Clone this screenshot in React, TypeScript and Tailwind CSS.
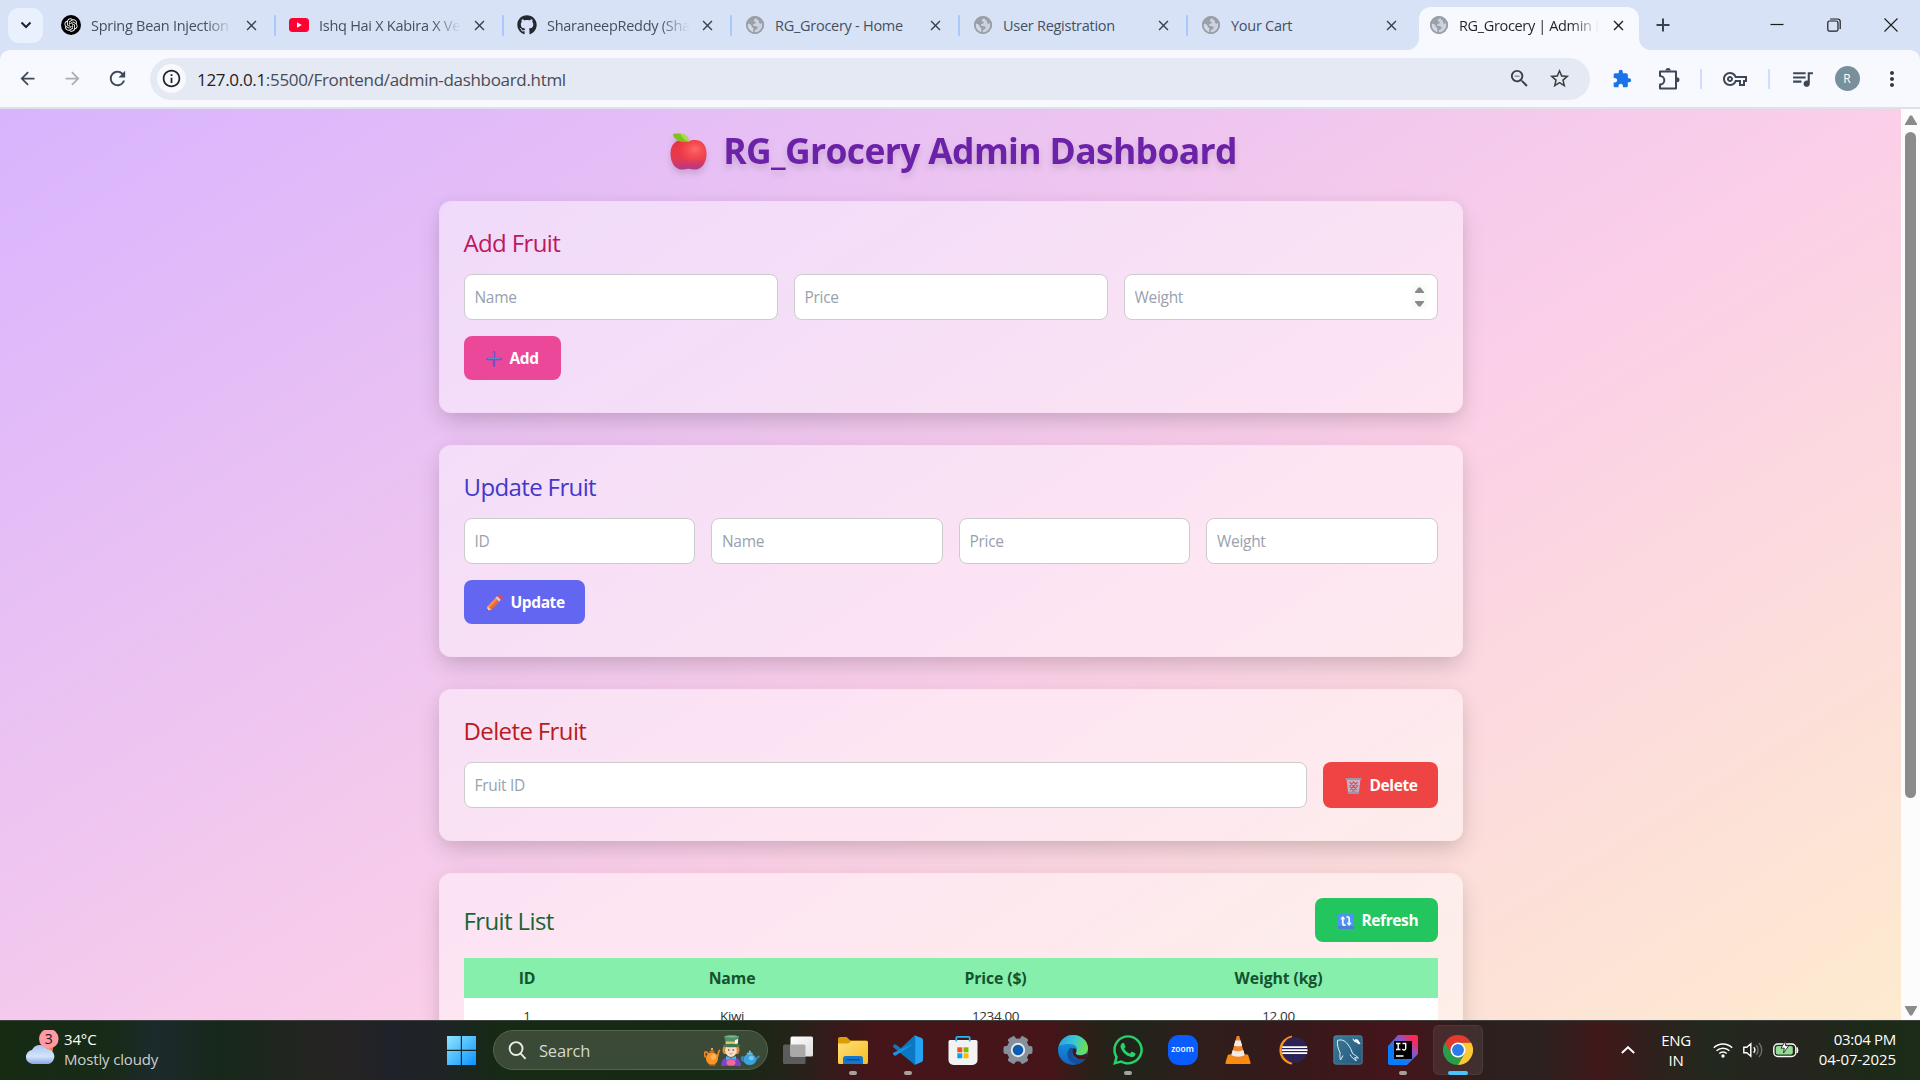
import React from 'react';
import {
  MdArrowBack,
  MdArrowForward,
  MdClose,
  MdExtension,
  MdInfoOutline,
  MdMoreVert,
  MdQueueMusic,
  MdRefresh,
  MdOutlineVpnKey,
  MdOutlineZoomOut,
  MdStarBorder,
} from 'react-icons/md';
import { FaGithub, FaWhatsapp } from 'react-icons/fa';
import { RiOpenaiFill } from 'react-icons/ri';

/* ---------- Browser chrome ---------- */

function Globe() {
  return (
    <svg viewBox="0 0 18 18" className="size-[18px]">
      <circle cx="9" cy="9" r="9" fill="#9aa0a6" />
      <path
        d="M10.500 2.200C8.500 2.500 7 4 8.200 5.300c.8.700 1.800.6 1.600 1.600C9.500 7.900 7 7.400 7 9c0 1.500 2.300 1 3.800 1.500 1.200.4 1 1.600.2 2.300-.8.800-2 .9-2.300 2-.1.700.2 1.200.6 1.600 3.900-.2 7-3.400 7-7.400 0-.7-.1-1.300-.3-1.900-.9.800-2.300.7-2.800-.1-.5-.9.100-1.700-.6-2.400-.7-.6-1.900-.900-2.100-2.400z"
        fill="#d7dff0"
        opacity=".8"
      />
      <path d="M1.700 7.500c1.200.3 2.700.7 3.500 1.700.7 1 .2 1.500 1.400 2.200.9.500.9 1.300.7 2.200-.1.800-.1 1.700.1 2.500C3.800 15.500 1 12 1.700 7.500z" fill="#d7dff0" opacity=".9" />
      <circle cx="9" cy="9" r="8.200" fill="none" stroke="#9aa0a6" strokeWidth="1.600" />
    </svg>
  );
}

function OpenAiIcon() {
  return (
    <span className="-ml-px flex size-5 items-center justify-center rounded-full bg-black text-white">
      <RiOpenaiFill size={16} />
    </span>
  );
}

function YoutubeIcon() {
  return (
    <svg viewBox="0 0 20 14" className="h-[14px] w-5">
      <rect width="20" height="14" rx="3.500" fill="#ff0033" />
      <path d="M8 4.200v5.600l4.800-2.800z" fill="#fff" />
    </svg>
  );
}

type TabItem = { title: string; icon: React.ReactNode; fade?: boolean };

const tabs: TabItem[] = [
  { title: 'Spring Bean Injection', icon: <OpenAiIcon />, fade: true },
  { title: 'Ishq Hai X Kabira X Ve', icon: <YoutubeIcon />, fade: true },
  { title: 'SharaneepReddy (Sha', icon: <FaGithub size={20} color="#24292f" />, fade: true },
  { title: 'RG_Grocery - Home', icon: <Globe /> },
  { title: 'User Registration', icon: <Globe /> },
  { title: 'Your Cart', icon: <Globe /> },
];

const fadeMask = '[mask-image:linear-gradient(to_right,black_80%,transparent)]';

function TabStrip() {
  return (
    <div className="flex h-[50px] bg-[#d8e2f7]">
      <div className="flex h-full w-[49px] shrink-0 items-center pl-2">
        <span className="flex size-[35px] items-center justify-center rounded-[11px] bg-[#e9f0fe]">
          <svg viewBox="0 0 12 12" className="size-3" fill="none" stroke="#1f2328" strokeWidth="2">
            <path d="M1.500 3.500 6 8l4.500-4.500" />
          </svg>
        </span>
      </div>
      {tabs.map((t, i) => (
        <div key={t.title} className="flex h-full w-[228px] shrink-0 items-center pl-3">
          <span className="flex w-5 shrink-0 justify-center">{t.icon}</span>
          <span
            className={
              'ml-[10px] w-[142px] shrink-0 overflow-hidden pt-px text-[14.5px] whitespace-nowrap text-[#44505f] tracking-[-0.27px] ' +
              (t.fade ? fadeMask : '')
            }
          >
            {t.title}
          </span>
          <MdClose className="ml-[10px] shrink-0" size={17} color="#39424e" />
          <span className={'ml-[14px] h-[21px] w-[2px] shrink-0 rounded bg-[#a8c7fa] ' + (i === 5 ? 'invisible' : '')} />
        </div>
      ))}
      <div className="flex h-full w-[249px] shrink-0 items-end">
        <svg viewBox="0 0 12 12" className="-ml-[10px] size-3 shrink-0">
          <path d="M12 0v12H0A12 12 0 0 0 12 0z" fill="#f8f9ff" />
        </svg>
        <div className="flex h-[43px] w-[220px] shrink-0 items-center rounded-t-[12px] bg-[#f8f9ff] pb-[7px] pl-[11px]">
          <Globe />
          <span className={'ml-[11px] w-[140px] overflow-hidden pt-px text-[14.5px] tracking-[-0.35px] whitespace-nowrap text-[#1f2328] ' + fadeMask}>
            RG_Grocery | Admin D
          </span>
          <MdClose className="ml-[11px] shrink-0" size={17} color="#1f2328" />
        </div>
        <svg viewBox="0 0 12 12" className="size-3 shrink-0">
          <path d="M0 0v12h12A12 12 0 0 1 0 0z" fill="#f8f9ff" />
        </svg>
      </div>
      <div className="flex h-full flex-1 items-center">
        <svg viewBox="0 0 14 14" className="-ml-[10px] size-[14px]" stroke="#39424e" strokeWidth="2">
          <path d="M7 .5v13M.5 7h13" />
        </svg>
        <div className="ml-auto flex items-center gap-[43px] pr-[22px]">
          <svg viewBox="0 0 14 14" className="size-[14px]" stroke="#1b1b1b" strokeWidth="1.200">
            <path d="M0.500 6.500h13" />
          </svg>
          <svg viewBox="0 0 14 14" className="size-[14px]" fill="none" stroke="#1b1b1b" strokeWidth="1.200">
            <rect x=".8" y="3" width="10.200" height="10.200" rx="1.800" />
            <path d="M3.200 1h7.300a2.700 2.700 0 0 1 2.700 2.700v7.300" />
          </svg>
          <svg viewBox="0 0 14 14" className="size-[14px]" stroke="#1b1b1b" strokeWidth="1.100">
            <path d="M.5.5l13 13M13.500.5l-13 13" />
          </svg>
        </div>
      </div>
    </div>
  );
}

function Slot({ w, children }: { w: string; children: React.ReactNode }) {
  return <span className={'flex shrink-0 items-center justify-center ' + w}>{children}</span>;
}

function Toolbar() {
  return (
    <div className="h-[59px] bg-[#d8e2f7]">
      <div className="flex h-full items-center rounded-t-[10px] border-b-2 border-[#dde1ea] bg-[#f8f9ff] pl-[5px]">
        <Slot w="w-[45px]">
          <MdArrowBack size={21} color="#3c4858" />
        </Slot>
        <Slot w="w-[45px]">
          <MdArrowForward size={21} color="#a9adb5" />
        </Slot>
        <Slot w="w-[45px]">
          <MdRefresh size={23} color="#3c4858" />
        </Slot>
        <div className="ml-[10px] flex h-[42px] w-[1440px] shrink-0 items-center rounded-full bg-[#e5e9f3] pl-[7px]">
          <span className="flex size-[29px] items-center justify-center rounded-full bg-[#f8f9ff]">
            <MdInfoOutline size={21} color="#1f2328" />
          </span>
          <span className="ml-[11px] pt-[2px] text-[17px] tracking-[-0.32px] whitespace-nowrap text-[#474c55]">
            <span className="text-[#1b1e23]">127.0.0.1</span>:5500/Frontend/admin-dashboard.html
          </span>
          <span className="ml-auto flex items-center gap-[17px] pr-[19px]">
            <MdOutlineZoomOut size={23} color="#3c4043" />
            <MdStarBorder size={23} color="#3c4043" />
          </span>
        </div>
        <Slot w="w-[64px]">
          <MdExtension size={20} color="#1a73e8" />
        </Slot>
        <Slot w="w-[30px]">
          <svg viewBox="0 0 24 26" className="h-[26px] w-6" fill="none" stroke="#3c4858" strokeWidth="2" strokeLinejoin="round">
            <path d="M3 5.500h16v17H3v-4a4.300 4.300 0 0 0 0-8.600z" />
            <path d="M8.500 4.500a2.600 2.600 0 0 1 5.200 0zM20 11.300a2.500 2.500 0 0 1 0 5z" fill="#3c4858" strokeWidth="0" />
          </svg>
        </Slot>
        <span className="ml-[16px] h-[20px] w-[2px] shrink-0 bg-[#cfdefb]" />
        <Slot w="w-[66px]">
          <MdOutlineVpnKey size={24} color="#3c4858" />
        </Slot>
        <span className="h-[20px] w-[2px] shrink-0 bg-[#cfdefb]" />
        <Slot w="w-[64px]">
          <MdQueueMusic size={25} color="#3c4858" />
        </Slot>
        <Slot w="w-[26px]">
          <span className="flex size-[25px] shrink-0 items-center justify-center rounded-full bg-[#78909c] text-[12px] text-white">R</span>
        </Slot>
        <Slot w="w-[64px]">
          <MdMoreVert size={24} color="#303a46" />
        </Slot>
      </div>
    </div>
  );
}

/* ---------- Emoji drawings ---------- */

function Apple() {
  return (
    <svg viewBox="0 0 37 37" className="mt-[2px] h-[37px] w-[37px]">
      <defs>
        <linearGradient id="appleBody" x1="0" y1="0" x2="0" y2="1">
          <stop offset="0" stopColor="#e9343f" />
          <stop offset=".65" stopColor="#e63950" />
          <stop offset="1" stopColor="#b03a8c" />
        </linearGradient>
        <radialGradient id="appleGlow" cx=".68" cy=".32" r=".5">
          <stop offset="0" stopColor="#ff6a66" />
          <stop offset="1" stopColor="#ff4a4a" stopOpacity="0" />
        </radialGradient>
      </defs>
      <path d="M18.500 8.500C23 5.800 36.500 5 36.500 21c0 9-5 15.500-11 15.500-3 0-4-.8-7-.8s-4 .8-7 .8C5.500 36.500.5 30 .5 21c0-16 13.500-15.200 18-12.500z" fill="url(#appleBody)" />
      <path d="M18.500 8.500C23 5.800 36.500 5 36.500 21c0 9-5 15.500-11 15.500-3 0-4-.8-7-.8s-4 .8-7 .8C5.500 36.500.5 30 .5 21c0-16 13.500-15.200 18-12.500z" fill="url(#appleGlow)" />
      <path d="M3 1c8-1.500 15 .5 16 7.500C11 10 3.500 7.500 3 1z" fill="#7fc31c" />
      <path d="M10 .6c5 .3 8.500 3 9 7.900-3 .2-6-3-9-7.900z" fill="#a5dc4a" />
    </svg>
  );
}

function Plus() {
  return (
    <svg viewBox="0 0 16 16" className="size-4">
      <path d="M8 1.300v13.400" stroke="#7a4fb5" strokeWidth="2.400" strokeLinecap="round" />
      <path d="M1.300 8h13.400" stroke="#6a55c4" strokeWidth="2.400" strokeLinecap="round" />
      <path d="M7.600 1.500V7.600H1.500M8 7.600h6" stroke="#5f93dc" strokeWidth=".9" fill="none" />
    </svg>
  );
}

function Pencil() {
  return (
    <svg viewBox="0 0 17 17" className="size-[17px]">
      <path d="M1.500 12.300 9.500 3.800l3.700 3.700-8 8.200-3.900.9z" fill="#ff8a3c" />
      <path d="M3.300 14l8-8.300 1.900 1.800-8 8.200z" fill="#e8663a" />
      <path d="M1.500 12.300l3.700 3.400-4 .9z" fill="#f3c9a0" />
      <path d="M1.300 15l1.200 1.300-1.600.4z" fill="#4b3a3a" />
      <path d="M9.500 3.800l1.700-1.800 3.700 3.700-1.700 1.800z" fill="#d3cfe4" />
      <path d="M11.200 2l1.300-1.300a1.300 1.300 0 0 1 1.800 0L16.200 2.600a1.300 1.300 0 0 1 0 1.800L14.900 5.700z" fill="#f5443f" />
    </svg>
  );
}

function Trash() {
  return (
    <svg viewBox="0 0 17 17" className="size-[17px]">
      <path d="M1.500 2h14l-1.700 14.500H3.200z" fill="#c3b4c6" />
      <path d="M4.500 5l7.500 8M8 4.500l5 5M4.500 9l5.500 6M12.500 5L5 13M9 4.500l-4.500 5M12.500 9L7 15" stroke="#d8505c" strokeWidth="1.100" />
      <rect x=".5" y="1" width="16" height="2" rx=".6" fill="#a193a9" />
      <rect x="3" y="14.500" width="11" height="2" rx=".6" fill="#a193a9" />
    </svg>
  );
}

function RefreshBadge() {
  return (
    <svg viewBox="0 0 16 16" className="ml-px size-4" fill="none">
      <rect width="16" height="16" rx="1.500" fill="#4a95f5" />
      <path d="M0 13h16v1.500A1.500 1.500 0 0 1 14.500 16h-13A1.500 1.500 0 0 1 0 14.500z" fill="#4a7fe0" />
      <path d="M7.500 12.200H6.800A2 2 0 0 1 4.800 10.200V4.500M8.500 3.800h.7a2 2 0 0 1 2 2v5.700" stroke="#fff" strokeWidth="1.700" />
      <path d="M2.200 6.300 4.800 3l2.600 3.300zM8.600 9.700h5.200L11.200 13z" fill="#fff" />
    </svg>
  );
}

/* ---------- Dashboard ---------- */

function Card({ className, children }: { className: string; children: React.ReactNode }) {
  return (
    <section
      className={
        'flex flex-col rounded-xl border border-white/40 bg-white/45 bg-clip-padding px-6 pt-6 shadow-[0_10px_24px_-3px_rgba(0,0,0,0.18),0_0_14px_rgba(0,0,0,0.03)] ' +
        className
      }
    >
      {children}
    </section>
  );
}

function Heading({ color, children }: { color: string; children: React.ReactNode }) {
  return <h2 className={'h-8 pt-px text-[24px] leading-8 font-[530] tracking-[-0.62px] ' + color}>{children}</h2>;
}

function Field({ placeholder, className = 'w-full' }: { placeholder: string; className?: string }) {
  return (
    <input
      placeholder={placeholder}
      className={
        'h-[46px] min-w-0 rounded-lg border border-[#cccccc] bg-white px-[10px] text-[15.5px] tracking-[-0.3px] text-gray-800 outline-none placeholder:text-gray-400 ' +
        className
      }
    />
  );
}

function Button({ className, icon, label }: { className: string; icon: React.ReactNode; label: string }) {
  return (
    <button className={'flex shrink-0 items-center gap-[8px] rounded-lg pt-px pl-[22px] text-[15.5px] font-bold tracking-[-0.4px] text-white ' + className}>
      {icon}
      <span className="pt-px">{label}</span>
    </button>
  );
}

function Dashboard() {
  return (
    <div className="flex h-[911px] overflow-hidden">
      <div className="h-[1188px] flex-1 bg-[linear-gradient(to_bottom_right,#d8b4fe,#fbcfe8,#fef3c7)] pt-[21px]">
        <h1 className="mx-auto mb-[31px] flex h-10 w-[1024px] items-center justify-center pl-[6px] text-[35.5px] leading-10 font-bold tracking-[-0.66px] text-[#6b21a8] drop-shadow-[0_4px_3px_rgba(0,0,0,0.13)]">
          <Apple />
          <span className="ml-[16px] whitespace-nowrap">RG_Grocery Admin Dashboard</span>
        </h1>
        <main className="mx-auto flex w-[1024px] flex-col gap-8">
          <Card className="h-[212px]">
            <Heading color="text-[#be185d]">Add Fruit</Heading>
            <div className="mt-4 grid grid-cols-3 gap-4">
              <Field placeholder="Name" />
              <Field placeholder="Price" />
              <div className="relative">
                <Field placeholder="Weight" />
                <span className="absolute top-[11px] right-[11px] flex h-6 w-[15px] flex-col items-center justify-between bg-[#fafafa] py-[2px]">
                  <svg viewBox="0 0 9 6" className="h-[6px] w-[9px]">
                    <path d="M3.500.5h2L9 5v1H0V5z" fill="#8a8a8a" />
                  </svg>
                  <svg viewBox="0 0 9 6" className="h-[6px] w-[9px]">
                    <path d="M3.500 5.500h2L9 1V0H0v1z" fill="#8a8a8a" />
                  </svg>
                </span>
              </div>
            </div>
            <Button className="mt-4 h-11 w-[97px] bg-[#ec4899]" icon={<Plus />} label="Add" />
          </Card>

          <Card className="h-[212px]">
            <Heading color="text-[#4338ca]">Update Fruit</Heading>
            <div className="mt-4 grid grid-cols-4 gap-4">
              <Field placeholder="ID" />
              <Field placeholder="Name" />
              <Field placeholder="Price" />
              <Field placeholder="Weight" />
            </div>
            <Button className="mt-4 h-11 w-[121px] bg-[#6366f1]" icon={<Pencil />} label="Update" />
          </Card>

          <Card className="h-[152px]">
            <Heading color="text-[#b91c1c]">Delete Fruit</Heading>
            <div className="mt-4 flex gap-4">
              <Field placeholder="Fruit ID" className="flex-1" />
              <Button className="h-[46px] w-[115px] bg-[#ef4444]" icon={<Trash />} label="Delete" />
            </div>
          </Card>

          <Card className="h-[300px]">
            <div className="flex h-11 items-center justify-between">
              <Heading color="text-[#166534]">Fruit List</Heading>
              <Button className="h-11 w-[123px] bg-[#22c55e]" icon={<RefreshBadge />} label="Refresh" />
            </div>
            <table className="mt-4 w-full table-fixed text-center">
              <colgroup>
                <col className="w-[127px]" />
                <col className="w-[283px]" />
                <col className="w-[244px]" />
                <col className="w-[320px]" />
              </colgroup>
              <thead>
                <tr className="h-10 bg-[#86efac] text-[15.8px] font-bold tracking-[-0.12px] text-[#14532d]">
                  <th className="pt-px">ID</th>
                  <th className="pt-px">Name</th>
                  <th className="pt-px">Price ($)</th>
                  <th className="pt-px pl-[2px]">Weight (kg)</th>
                </tr>
              </thead>
              <tbody>
                <tr className="h-[36px] bg-white text-[13.5px] tracking-[-0.4px] text-[#333333]">
                  <td>1</td>
                  <td>Kiwi</td>
                  <td>1234.00</td>
                  <td className="pl-[2px]">12.00</td>
                </tr>
              </tbody>
            </table>
          </Card>
        </main>
      </div>
      <div className="flex w-[19px] shrink-0 flex-col items-center bg-[#fcfcfc] pt-[6px] pb-[4px]">
        <svg viewBox="0 0 12 10" className="h-[10px] w-3">
          <path d="M5 .5h2L12 9v1H0V9z" fill="#8b8b8b" />
        </svg>
        <div className="mt-[7px] h-[666px] w-[11px] rounded-full bg-[#8b8b8b]" />
        <svg viewBox="0 0 12 10" className="mt-auto h-[10px] w-3">
          <path d="M5 9.500h2L12 1V0H0v1z" fill="#8b8b8b" />
        </svg>
      </div>
    </div>
  );
}

/* ---------- Taskbar icons ---------- */

function WeatherIcon() {
  return (
    <svg viewBox="0 0 38 40" className="h-10 w-[38px]">
      <defs>
        <linearGradient id="cloud" x1="0" y1="0" x2="0" y2="1">
          <stop offset="0" stopColor="#a9c6f5" />
          <stop offset=".6" stopColor="#d5e3fa" />
          <stop offset="1" stopColor="#86a9e8" />
        </linearGradient>
      </defs>
      <circle cx="22" cy="19" r="6" fill="#f58220" />
      <path d="M7.500 34a7.100 7.100 0 0 1-.5-14.100A8.500 8.500 0 0 1 22 19a7.600 7.600 0 0 1 1.500 15z" fill="url(#cloud)" />
      <ellipse cx="23.800" cy="8.800" rx="9.800" ry="9.900" fill="#ff99a4" />
      <text x="23.800" y="13.800" fontSize="14" textAnchor="middle" fill="#1b1b1b">
        3
      </text>
    </svg>
  );
}

function WindowsLogo() {
  return (
    <svg viewBox="0 0 29 29" className="size-[29px]">
      <defs>
        <linearGradient id="win" x1="0" y1="0" x2="1" y2="1">
          <stop offset="0" stopColor="#8fe6ff" />
          <stop offset="1" stopColor="#0a93ff" />
        </linearGradient>
      </defs>
      <path d="M0 0h13.800v13.800H0zM15 0h14v13.800H15zM0 15h13.800v14H0zM15 15h14v14H15z" fill="url(#win)" />
    </svg>
  );
}

function TeaParty() {
  return (
    <svg viewBox="0 0 56 31" className="h-[31px] w-14">
      <path d="M4.500 19C1 14.500-.5 18 1.500 22.500M12 23c3-1 1-6 4-8" stroke="#ee8420" strokeWidth="1.800" fill="none" />
      <ellipse cx="8" cy="23.500" rx="6" ry="6.300" fill="#fb9626" />
      <ellipse cx="9.500" cy="22" rx="2.500" ry="3" fill="#ffb555" />
      <path d="M5 30.500l1-1.500h5l1 1.500zM5.200 17.500c0-3 5.600-3 5.600 0z" fill="#d96b12" />
      <circle cx="8" cy="14" r="1.200" fill="#f9a23a" />
      <path d="M17 31c0-6 3-9 10-9s10 3 10 9z" fill="#7a45c8" />
      <path d="M20 11c-2 2-2 6 0 8h14c2-2 2-6 0-8z" fill="#e48b3a" />
      <ellipse cx="27" cy="15.500" rx="5.800" ry="6.500" fill="#f8dcc4" />
      <circle cx="24.800" cy="15" r=".8" fill="#4a3326" />
      <circle cx="29.200" cy="15" r=".8" fill="#4a3326" />
      <path d="M25.500 18.500q1.500 1 3 0" stroke="#c46a5a" strokeWidth=".7" fill="none" />
      <path d="M20 1.500c3-1.800 12-1.800 15 0l-1.500 8h-11z" fill="#4f8f63" />
      <path d="M20 1.500c3-1.500 12-1.500 15 0-3 1.500-12 1.500-15 0z" fill="#79b487" />
      <path d="M21.300 6.500h12.700l-.5 3H22z" fill="#e9c27a" />
      <path d="M31 5l3-1v4l-3 1z" fill="#fff3dc" />
      <ellipse cx="27.500" cy="10.500" rx="9" ry="1.800" fill="#3c7a50" />
      <path d="M22 21l5 2 5-2v4l-5-1.500L22 25z" fill="#46b2ec" />
      <ellipse cx="27" cy="27.500" rx="4.500" ry="3.300" fill="#f2689a" />
      <path d="M40.500 22.500c-4-2-4 3 1 4M50 26c3 0 2-4.500 5.500-4.500" stroke="#2f8cc8" strokeWidth="1.800" fill="none" />
      <ellipse cx="45.800" cy="24.500" rx="6.300" ry="5.600" fill="#3ba3de" />
      <ellipse cx="47.300" cy="23" rx="2.500" ry="2.300" fill="#74c9f2" />
      <path d="M42.500 19.500c0-3 6.500-3 6.500 0z" fill="#6cc4f0" />
      <circle cx="45.800" cy="16.600" r="1" fill="#6cc4f0" />
    </svg>
  );
}

function TaskView() {
  return (
    <svg viewBox="0 0 30 30" className="size-[30px]">
      <defs>
        <linearGradient id="tvFront" x1="0" y1="0" x2="1" y2="1">
          <stop offset="0" stopColor="#ffffff" />
          <stop offset="1" stopColor="#dedede" />
        </linearGradient>
      </defs>
      <rect x="0" y="9.500" width="22.500" height="19.500" rx="1.500" fill="#5c5c5c" />
      <rect x="7.500" y="1.500" width="22.500" height="20" rx="1.500" fill="url(#tvFront)" />
      <path d="M7.500 9.500H21a1.500 1.500 0 0 1 1.500 1.500v10.500H9A1.500 1.500 0 0 1 7.500 20z" fill="#a9a9a9" />
    </svg>
  );
}

function Explorer() {
  return (
    <svg viewBox="0 0 30 30" className="size-[30px]">
      <defs>
        <linearGradient id="folder" x1="0" y1="0" x2="1" y2="1">
          <stop offset="0" stopColor="#ffe07a" />
          <stop offset="1" stopColor="#f7bb1f" />
        </linearGradient>
      </defs>
      <path d="M0 4a2 2 0 0 1 2-2h6.500l4 3.500H28a2 2 0 0 1 2 2V12H0z" fill="#dd9b05" />
      <path d="M0 8.500h10.500L13 6h15.500A1.500 1.500 0 0 1 30 7.500v20a1.500 1.500 0 0 1-1.500 1.500h-27A1.500 1.500 0 0 1 0 27.500z" fill="url(#folder)" />
      <path d="M5 29v-5.500a2.500 2.500 0 0 1 2.500-2.500h15a2.500 2.500 0 0 1 2.500 2.500V29z" fill="#1377cf" />
      <rect x="8" y="24" width="14" height="1.600" rx=".8" fill="#0a4f96" />
    </svg>
  );
}

function VsCode() {
  return (
    <svg viewBox="0 0 30 30" className="size-[30px]">
      <path d="M22 0 7.800 13.300 2.800 9.400a1.200 1.200 0 0 0-1.500.1L.3 10.600a1.200 1.200 0 0 0 0 1.700L22 30v-7.800z" fill="#0a78c2" />
      <path d="M22 7.800.3 17.700a1.200 1.200 0 0 0 0 1.700l1 1.100a1.200 1.200 0 0 0 1.500.1L22 7.800z" fill="#1c93e0" />
      <path d="M21.500.2 28.600 3A2.200 2.200 0 0 1 30 5v20a2.200 2.200 0 0 1-1.400 2l-7.100 2.900c.5-.3.6-.7.6-1.300V1.400c0-.6-.2-1-.6-1.200z" fill="#26a3f2" />
    </svg>
  );
}

function Store() {
  return (
    <svg viewBox="0 0 30 30" className="size-[30px]">
      <path d="M.5 6.500A1.500 1.500 0 0 1 2 5h26a1.500 1.500 0 0 1 1.500 1.500V25a5 5 0 0 1-5 5h-19a5 5 0 0 1-5-5z" fill="#f3f3f3" />
      <path d="M8.300 6.500V2.900A1 1 0 0 1 9.300 1.900h11.400a1 1 0 0 1 1 1v3.600" fill="none" stroke="#28b4ee" strokeWidth="1.800" />
      <path d="M9.300 12.300h5v5h-5z" fill="#f25022" />
      <path d="M15.500 12.300h5v5h-5z" fill="#7fba00" />
      <path d="M9.300 18.300h5v5h-5z" fill="#00a4ef" />
      <path d="M15.500 18.300h5v5h-5z" fill="#ffb900" />
    </svg>
  );
}

function Gear() {
  return (
    <svg viewBox="0 0 30 30" className="size-[30px]">
      <g fill="#87909a">
        <circle cx="15" cy="15" r="11.500" />
        <rect x="11" y="0.500" width="8" height="29" rx="2" transform="rotate(30 15 15)" />
        <rect x="11" y="0.500" width="8" height="29" rx="2" transform="rotate(90 15 15)" />
        <rect x="11" y="0.500" width="8" height="29" rx="2" transform="rotate(150 15 15)" />
      </g>
      <circle cx="15" cy="15" r="7.200" fill="#e8eaee" />
      <circle cx="15" cy="15" r="5.300" fill="#0d5cb0" />
    </svg>
  );
}

function Edge() {
  return (
    <svg viewBox="0 0 30 30" className="size-[30px]">
      <defs>
        <linearGradient id="edgeTop" x1="0" y1=".2" x2="1" y2=".5">
          <stop offset="0" stopColor="#2f9fe6" />
          <stop offset=".5" stopColor="#38c7d3" />
          <stop offset="1" stopColor="#6ee04f" />
        </linearGradient>
        <linearGradient id="edgeLeft" x1="0" y1="0" x2="0" y2="1">
          <stop offset="0" stopColor="#1b9de2" />
          <stop offset="1" stopColor="#0f63c4" />
        </linearGradient>
      </defs>
      <circle cx="15" cy="15" r="15" fill="url(#edgeLeft)" />
      <path d="M1 11C3 4 8.500 0 15 0c8.500 0 15 6 15 13 0 4.500-3.500 7-7.500 7-4 0-5.500-1.500-4.500-3 2.500-3.500 0-8-6-8-4 0-8 .5-11 2z" fill="url(#edgeTop)" />
      <path d="M11 14c-4 6 0 14 7 15 4 .5 8-2.500 9.500-5.500-8 3-14-1-13-7 .3-1.600 1.300-2.600 2-3-2-1-4.200-1-5.500.5z" fill="#124f9c" />
      <path d="M14.500 16c.2-1.500 1-2.400 1.800-2.800 2.300 1 2.700 2.700 1.700 4.300-.8 1.600.7 2.900 4.500 2.900 2.500 0 4.500-.8 7-2.300-.3 2-1.300 4.200-2.500 5.700-7 2-13-2.300-12.500-7.800z" fill="#46151a" />
    </svg>
  );
}

function Zoom() {
  return (
    <span className="flex size-[30px] items-center justify-center rounded-[11px] bg-[#0b5cff] pb-px text-[8.5px] font-semibold text-white">
      zoom
    </span>
  );
}

function Vlc() {
  return (
    <svg viewBox="0 0 30 30" className="size-[30px]">
      <path d="M5 19.500h20l2.500 8a1 1 0 0 1-1 1.500h-23a1 1 0 0 1-1-1.500z" fill="#f98b0d" />
      <path d="M13.800 1h2.400l6 21c-3 2.500-11.400 2.500-14.400 0z" fill="#f3852a" />
      <path d="M12.400 5.500h5.200l1.500 5c-2 1.200-6.200 1.200-8.200 0zM9.700 15c3 1.800 7.600 1.800 10.600 0l1.400 5c-3 2.200-10.400 2.200-13.400 0z" fill="#ececec" />
    </svg>
  );
}

function Eclipse() {
  return (
    <svg viewBox="0 0 30 30" className="size-[30px]">
      <path d="M14 1.500a13.800 13.800 0 0 0 0 27.300A15 15 0 0 1 14 1.500z" fill="#f7941e" stroke="#f7941e" strokeWidth="1.600" />
      <circle cx="16.700" cy="15" r="12.900" fill="#2c2255" />
      <path d="M4.200 11.200h25v1.800h-25zM3.900 14.200h25.700V16H3.900zM4.200 17.200h25V19h-25z" fill="#fff" />
    </svg>
  );
}

function Workbench() {
  return (
    <svg viewBox="0 0 30 30" className="size-[30px]">
      <defs>
        <linearGradient id="wb" x1="0" y1="0" x2="1" y2="1">
          <stop offset="0" stopColor="#3d7a99" />
          <stop offset="1" stopColor="#22587c" />
        </linearGradient>
      </defs>
      <rect x=".8" y=".8" width="28.400" height="28.400" rx="2" fill="url(#wb)" stroke="#5d93ad" strokeWidth=".7" />
      <path d="M7.500 25c-.5-2-1-4.500-.3-7C5 14 4 9 4.500 5.500 8 4 12 5.500 14.500 9c2.500 3 4 6 5 9.500 2 1.200 4.500 3 6 4.500l-4-.3 2 3c-3-1.200-5-3.700-6.500-6.200M7.500 25l2.500-4.500" fill="none" stroke="#e8f1f5" strokeWidth="1" />
      <path d="M20 3.500l2 2 .5-1.500c2 0 3 1 3.500 2.500l1.500 2-1.500 1-2.500-2c-2 0-3.500-2-4-4z" fill="#fff" />
    </svg>
  );
}

function IntelliJ() {
  return (
    <svg viewBox="0 0 30 30" className="size-[30px]">
      <defs>
        <linearGradient id="ij" x1="0" y1="1" x2="1" y2="0">
          <stop offset=".3" stopColor="#087cfa" />
          <stop offset=".6" stopColor="#7b5bd6" />
          <stop offset=".85" stopColor="#fe2857" />
        </linearGradient>
      </defs>
      <path d="M10 0h18a2 2 0 0 1 2 2v17L19 30H2a2 2 0 0 1-2-2V11z" fill="url(#ij)" />
      <path d="M6 6h18v18H6z" fill="#000" />
      <path d="M8 8.500h4.500M10.200 8.500v6M8 14.500h4.500M14.500 8.500h3.200v4.500a1.600 1.600 0 0 1-3.200.8M8 21h7.500" stroke="#fff" strokeWidth="1.400" fill="none" />
    </svg>
  );
}

function Chrome() {
  return (
    <svg viewBox="0 0 48 48" className="size-[30px]">
      <path d="M3.200 12A24 24 0 0 0 24 48l10.400-18L24 24z" fill="#2a9d49" />
      <path d="M44.800 12A24 24 0 0 1 24 48l10.400-18L24 12z" fill="#fcc934" />
      <path d="M3.200 12A24 24 0 0 1 44.800 12H24L13.600 30z" fill="#e33b2e" />
      <circle cx="24" cy="24" r="12" fill="#fff" />
      <circle cx="24" cy="24" r="9.500" fill="#2a7de8" />
    </svg>
  );
}

type AppItem = { name: string; icon: React.ReactNode; state?: 'open' | 'active' };

const apps: AppItem[] = [
  { name: 'taskview', icon: <TaskView /> },
  { name: 'explorer', icon: <Explorer />, state: 'open' },
  { name: 'vscode', icon: <VsCode />, state: 'open' },
  { name: 'store', icon: <Store /> },
  { name: 'settings', icon: <Gear /> },
  { name: 'edge', icon: <Edge /> },
  { name: 'whatsapp', icon: <FaWhatsapp size={34} color="#25d366" className="shrink-0" />, state: 'open' },
  { name: 'zoom', icon: <Zoom /> },
  { name: 'vlc', icon: <Vlc /> },
  { name: 'eclipse', icon: <Eclipse /> },
  { name: 'workbench', icon: <Workbench /> },
  { name: 'intellij', icon: <IntelliJ />, state: 'open' },
  { name: 'chrome', icon: <Chrome />, state: 'active' },
];

function Tray() {
  return (
    <div className="ml-auto flex h-full shrink-0 items-center text-[15px] tracking-[-0.3px] text-white">
      <svg viewBox="0 0 14 8" className="h-2 w-[14px]" fill="none" stroke="#fff" strokeWidth="1.900">
        <path d="M.8 7 7 1.200 13.200 7" />
      </svg>
      <div className="ml-[24px] w-[34px] pb-px text-center leading-[20px]">
        <div>ENG</div>
        <div>IN</div>
      </div>
      <svg viewBox="0 0 20 16" className="ml-[20px] h-4 w-5" fill="none" stroke="#fff" strokeWidth="1.500">
        <path d="M.8 5.800a13 13 0 0 1 18.400 0M3.600 8.800a9 9 0 0 1 12.800 0M6.300 11.500a5.200 5.200 0 0 1 7.400 0" />
        <circle cx="10" cy="14" r="1.700" fill="#fff" stroke="none" />
      </svg>
      <svg viewBox="0 0 20 18" className="ml-[10px] h-[18px] w-5" fill="none" stroke="#fff" strokeWidth="1.400">
        <path d="M.8 6.300v5.400h3l4 3.600V2.700l-4 3.600zM10.700 6.300a4 4 0 0 1 0 5.400" />
        <path d="M13.200 4.300a6.800 6.800 0 0 1 0 9.400M15.900 2a10 10 0 0 1 0 14" stroke="#6c6f6a" />
      </svg>
      <svg viewBox="0 0 26 18" className="-mt-[3px] ml-[10px] h-[18px] w-[26px]">
        <rect x=".8" y="4" width="22" height="12.500" rx="4" fill="none" stroke="#fff" strokeWidth="1.400" />
        <rect x="2.800" y="6" width="17" height="8.500" rx="1.800" fill="#93dc93" />
        <path d="M24.200 7.500q1.500 2.700 0 5.500z" fill="#fff" stroke="#fff" />
        <path d="M12.800.3 8 8.200h3.300L10.500 13l5.300-7.300h-3.300z" fill="#fff" stroke="#23271f" strokeWidth=".9" />
      </svg>
      <div className="mr-6 ml-[9px] w-[88px] pb-[2px] text-right leading-[20px] whitespace-nowrap">
        <div>03:04 PM</div>
        <div className="tracking-[-0.1px]">04-07-2025</div>
      </div>
    </div>
  );
}

function Taskbar() {
  return (
    <div className="flex h-[60px] items-center border-t border-[#3d4440] bg-[linear-gradient(to_right,#162b12_0px,#182a18_110px,#1c2a2c_155px,#17281a_220px,#222520_300px,#262423_340px,#1f2229_390px,#1f2326_440px,#162a14_500px,#162913_720px,#23231a_790px,#3a191a_840px,#461519_880px,#461519_1050px,#2b2018_1090px,#20241a_1125px,#2e1f1c_1190px,#35191b_1280px,#45151a_1400px,#2e1f1d_1480px,#2c211f_1540px,#40181a_1600px,#2e211c_1655px,#22281d_1710px,#26241f_1790px,#1c2a17_1880px,#1d2c1a_1920px)] pb-px">
      <div className="flex h-full w-[447px] shrink-0 items-center pl-[25px]">
        <WeatherIcon />
        <div className="ml-px pb-[2px] text-[15px] leading-[20px] tracking-[-0.15px] whitespace-nowrap">
          <div className="text-white">34°C</div>
          <div className="text-[#cdd0cf]">Mostly cloudy</div>
        </div>
      </div>
      <WindowsLogo />
      <div className="ml-[17px] flex h-10 w-[275px] shrink-0 items-center rounded-full border border-[#56634f] bg-[#3a4a36] pr-[7px] pl-[14px]">
        <svg viewBox="0 0 20 20" className="size-[19px]" fill="none" stroke="#e9ece8" strokeWidth="2">
          <circle cx="8.500" cy="8" r="6.800" />
          <path d="M13.200 13l5.300 5.800" />
        </svg>
        <span className="ml-[12px] pt-[2px] text-[16.5px] tracking-[-0.2px] text-[#d3d8d1]">Search</span>
        <span className="ml-auto">
          <TeaParty />
        </span>
      </div>
      <div className="ml-[2px] flex h-full items-center">
        {apps.map((a) => (
          <div key={a.name} className="flex h-full w-[55px] items-center justify-center">
            <div
              className={
                'relative flex h-[50px] w-[50px] items-center justify-center rounded-md ' +
                (a.state === 'active' ? 'border border-white/5 bg-white/8' : '')
              }
            >
              {a.icon}
              {a.state === 'open' && <span className="absolute bottom-0 left-[21px] h-1 w-2 rounded-full bg-[#a8a0a0]" />}
              {a.state === 'active' && <span className="absolute -bottom-px left-[14px] h-1 w-5 rounded-full bg-[#4cc2ff]" />}
            </div>
          </div>
        ))}
      </div>
      <Tray />
    </div>
  );
}

export default function App() {
  return (
    <div className="flex h-[1080px] w-[1920px] flex-col overflow-hidden font-['Open_Sans',sans-serif]">
      <TabStrip />
      <Toolbar />
      <Dashboard />
      <Taskbar />
    </div>
  );
}
